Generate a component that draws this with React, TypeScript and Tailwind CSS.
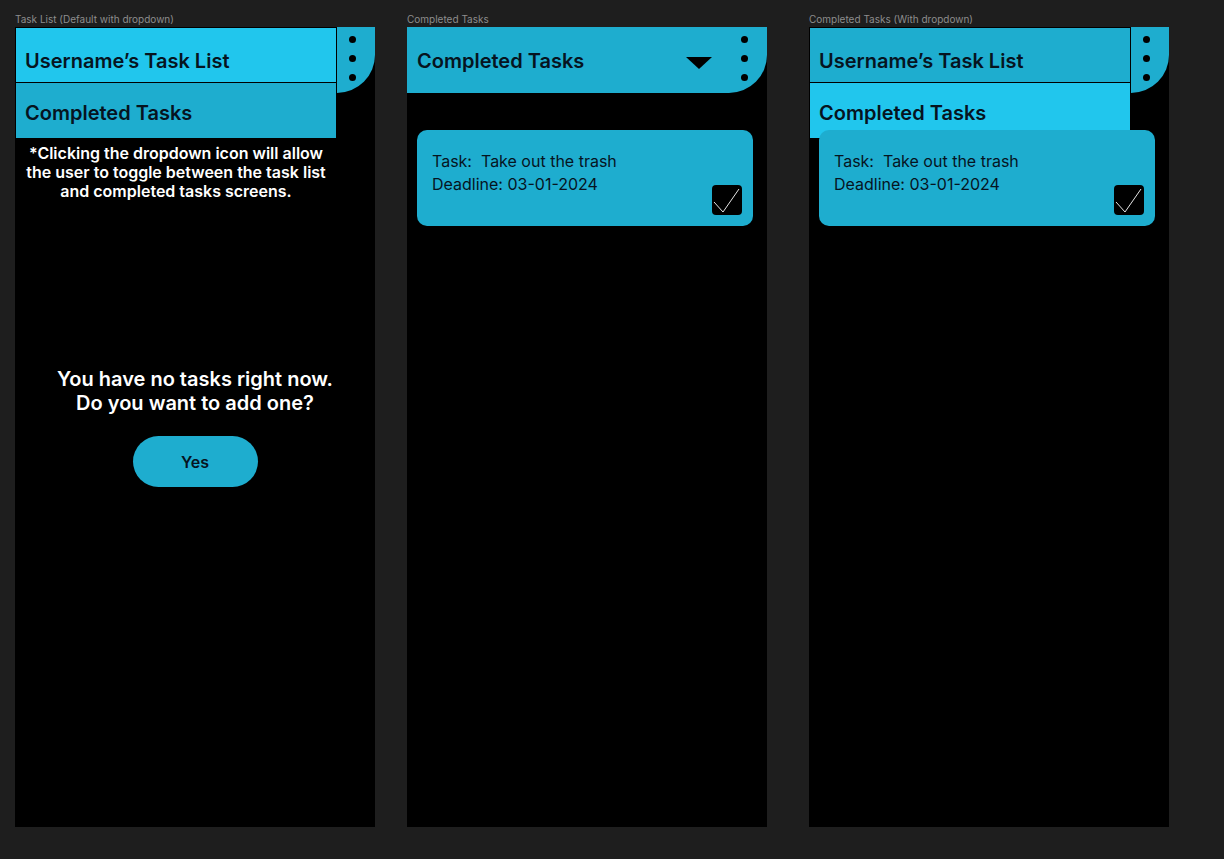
import React from "react";

const font = { fontFamily: "Inter, 'Noto Sans', sans-serif" };

function Dots() {
  return (
    <div className="flex flex-col gap-[12px] w-[46px] items-center">
      <span className="size-[7px] rounded-full bg-black" />
      <span className="size-[7px] rounded-full bg-black" />
      <span className="size-[7px] rounded-full bg-black" />
    </div>
  );
}

function Header({ children }: { children?: React.ReactNode }) {
  return (
    <div className="h-[66px] bg-[#1eadcf] rounded-br-[38px] flex items-center justify-between pb-[4px]">
      <div className="flex-1 flex items-center">{children}</div>
      <Dots />
    </div>
  );
}

// overlay menu that switches between the two screens
function Dropdown({ active }: { active: "list" | "done" }) {
  const light = "bg-[#21c6ed]";
  const dark = "bg-[#1eadcf]";
  return (
    <div className="absolute left-0 top-0 w-[322px] border border-black text-[20px] font-semibold text-[#06141f]">
      <div className={`h-[55px] flex items-center pl-[9px] pt-[12px] border-b border-black ${active === "list" ? light : dark}`}>
        Username’s Task List
      </div>
      <div className={`h-[55px] flex items-center pl-[9px] pt-[4px] ${active === "done" ? light : dark}`}>
        Completed Tasks
      </div>
    </div>
  );
}

function TaskCard() {
  return (
    <div className="mt-[37px] ml-[10px] w-[336px] h-[96px] rounded-[10px] bg-[#1eadcf] relative pl-[15px] pt-[20px] text-[16px] leading-[23px] text-[#06141f]">
      <p>Task:&nbsp; Take out the trash</p>
      <p>Deadline: 03-01-2024</p>
      <div className="absolute right-[11px] bottom-[11px] size-[30px] rounded-[4px] bg-black">
        <svg viewBox="0 0 30 30" className="size-[30px]">
          <path d="M2 17 L11 27 L27 4" fill="none" stroke="#e5e5e5" strokeWidth="1" />
        </svg>
      </div>
    </div>
  );
}

function Frame({ label, children }: { label: string; children: React.ReactNode }) {
  return (
    <div className="flex flex-col">
      <div className="h-[14px] text-[10px] leading-[12px] text-[#8d8d8d]">{label}</div>
      <div className="relative w-[360px] h-[800px] bg-black">{children}</div>
    </div>
  );
}

export default function App() {
  return (
    <div style={font} className="w-[1224px] h-[859px] bg-[#1e1e1e] pl-[15px] pt-[13px] flex overflow-hidden">
      <Frame label="Task List (Default with dropdown)">
        <Header />
        <Dropdown active="list" />
        <p className="w-[322px] mt-[51px] text-center text-white font-semibold text-[16px] leading-[19px] px-[6px]">
          *Clicking the dropdown icon will allow the user to toggle between the task list and completed tasks screens.
        </p>
        <div className="mt-[166px] text-center text-white font-semibold text-[20px] leading-[24px]">
          <p>You have no tasks right now.</p>
          <p>Do you want to add one?</p>
        </div>
        <div className="mt-[21px] flex justify-center">
          <button className="w-[125px] h-[51px] rounded-full bg-[#1eadcf] text-[#06141f] font-semibold text-[16px]">
            Yes
          </button>
        </div>
      </Frame>

      <div className="w-[32px]" />

      <Frame label="Completed Tasks">
        <Header>
          <span className="pl-[10px] text-[20px] font-semibold text-[#06141f] pt-[5px]">Completed Tasks</span>
          <svg viewBox="0 0 26 12" className="ml-auto mr-[9px] mt-[9px] w-[26px] h-[12px]">
            <path d="M0 0 H26 L13 12 Z" fill="#000" />
          </svg>
        </Header>
        <TaskCard />
      </Frame>

      <div className="w-[42px]" />

      <Frame label="Completed Tasks (With dropdown)">
        <Header />
        <Dropdown active="done" />
        <TaskCard />
      </Frame>
    </div>
  );
}
